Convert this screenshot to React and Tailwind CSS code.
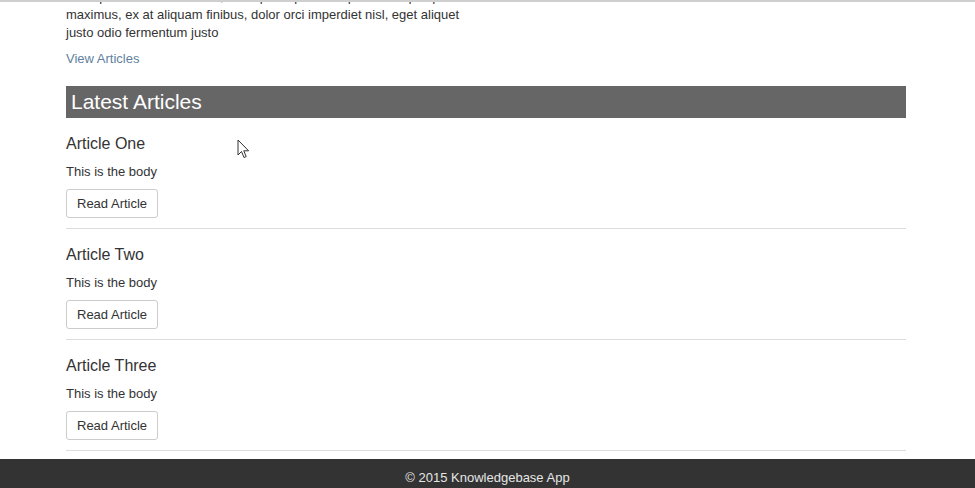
import React from 'react'

const articles = [
  { title: 'Article One', body: 'This is the body' },
  { title: 'Article Two', body: 'This is the body' },
  { title: 'Article Three', body: 'This is the body' },
]

function Cursor() {
  return (
    <svg className="absolute left-[237px] top-[139px]" width="13" height="20" viewBox="0 0 13 20">
      <path d="M1 1 L1 16 L4.5 12.5 L7 18.5 L9.2 17.6 L6.8 11.8 L11.6 11.8 Z" fill="#fff" stroke="#333" strokeWidth="1" strokeLinejoin="round" />
    </svg>
  )
}

export default function App() {
  return (
    <div className="relative h-[488px] overflow-hidden bg-white font-['Liberation_Sans',Arial,sans-serif] text-[13px] leading-[18px] text-[#333]">
      <div className="h-[2px] bg-[#cfcfcf] relative z-10" />
      <div className="mt-[-14px] px-[66px]">
        <div className="w-[840px]">
          <p className="w-[400px]">
            Nulla pretium laoreet tellus, eu dapibus purus aliquam sed quisque
            maximus, ex at aliquam finibus, dolor orci imperdiet nisl, eget aliquet
            justo odio fermentum justo
          </p>
          <a className="mt-[8px] block text-[#5f7f9f]">View Articles</a>

          <h2 className="mt-[18px] h-[32px] bg-[#666] pl-[5px] text-[21px] leading-[32px] text-white">
            Latest Articles
          </h2>

          <div className="mt-[16px]">
            {articles.map((a, idx) => (
              <div key={idx} className={idx > 0 ? 'mt-[16px]' : ''}>
                <h3 className="text-[16px] leading-[20px] text-[#333]">{a.title}</h3>
                <p className="mt-[9px]">{a.body}</p>
                <button className="mt-[8px] h-[29px] rounded-[3px] border border-[#ccc] bg-white px-[10px] text-[13px] text-[#333]">
                  Read Article
                </button>
                <hr className="mt-[10px] border-t border-[#ddd]" />
              </div>
            ))}
          </div>
        </div>
      </div>

      {/* Footer */}
      <footer className="mt-[8px] h-[40px] bg-[#333] pt-[10px] text-center text-[13px] leading-[18px] text-[#e6e6e6]">
        © 2015 Knowledgebase App
      </footer>

      <Cursor />
    </div>
  )
}
